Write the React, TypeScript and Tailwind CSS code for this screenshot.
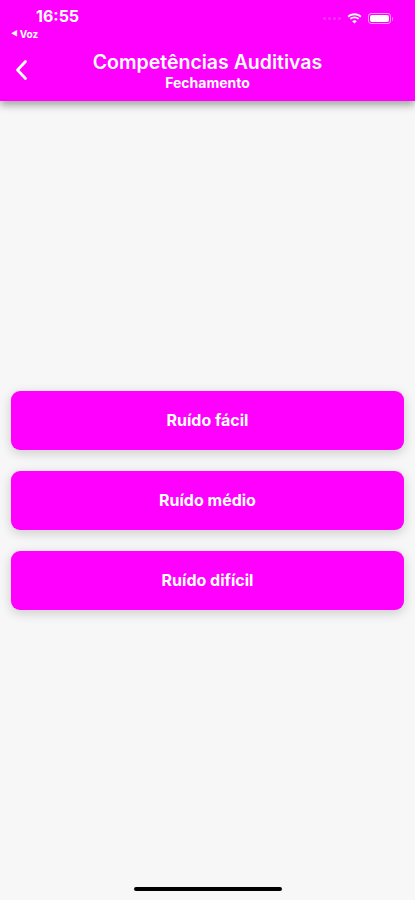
import React from "react";

const levels = ["Ruído fácil", "Ruído médio", "Ruído difícil"];

function StatusBar() {
  return (
    <div className="relative h-[44px] px-[36px]">
      <div className="pt-[6px] text-[16px] font-bold leading-[20px] text-white">16:55</div>
      <div className="absolute left-[11px] top-[28px] flex items-center gap-[2px] text-[10px] font-bold leading-[12px] text-white">
        <span className="text-[7px]">◀</span>
        <span>Voz</span>
      </div>
      <div className="absolute right-[22px] top-[13px] flex items-center gap-[6px]">
        <div className="flex items-end gap-[2px] opacity-20">
          <span className="h-[3px] w-[3px] rounded-full bg-white" />
          <span className="h-[3px] w-[3px] rounded-full bg-white" />
          <span className="h-[3px] w-[3px] rounded-full bg-white" />
          <span className="h-[3px] w-[3px] rounded-full bg-white" />
        </div>
        <svg width="15" height="11" viewBox="0 0 15 11">
          <path d="M7.5 2.2c2.2 0 4.2.8 5.7 2.2l1.2-1.3C12.5 1.3 10.1.3 7.5.3S2.5 1.3.6 3.1l1.2 1.3C3.3 3 5.3 2.2 7.5 2.2z" fill="white" />
          <path d="M7.5 5.3c1.3 0 2.5.5 3.5 1.3l1.2-1.3C10.9 4.1 9.3 3.4 7.5 3.4S4.1 4.1 2.8 5.3L4 6.6c1-.8 2.2-1.3 3.5-1.3z" fill="white" />
          <path d="M7.5 10.6L9.8 8.2C9.2 7.6 8.4 7.3 7.5 7.3s-1.7.3-2.3.9z" fill="white" />
        </svg>
        <div className="flex items-center gap-[1px]">
          <div className="flex h-[11px] w-[23px] items-center rounded-[3px] border border-white/60 p-[1px]">
            <div className="h-full w-full rounded-[2px] bg-white" />
          </div>
          <div className="h-[4px] w-[1.5px] rounded-r-sm bg-white/50" />
        </div>
      </div>
    </div>
  );
}

export default function App() {
  return (
    <div
      className="flex min-h-[900px] flex-col bg-[#f7f7f7]"
      style={{ fontFamily: "Inter, 'Noto Sans', sans-serif" }}
    >
      <header className="relative z-10 h-[101px] bg-[#ff00ff] shadow-[0_4px_8px_rgba(0,0,0,0.35)]">
        <StatusBar />
        <div className="relative flex h-[57px] flex-col items-center pt-[6px]">
          <button className="absolute left-[13px] top-[14px] text-white">
            <svg width="18" height="24" viewBox="0 0 18 24" fill="none">
              <path d="M12.5 3.5L4.5 12l8 8.5" stroke="white" strokeWidth="2.8" strokeLinecap="round" strokeLinejoin="round" />
            </svg>
          </button>
          <h1 className="text-[19.5px] font-semibold leading-[24px] text-white">Competências Auditivas</h1>
          <p className="text-[14px] font-bold leading-[17px] text-white">Fechamento</p>
        </div>
      </header>

      <main className="flex flex-1 flex-col justify-center gap-[21px] px-[11px] pt-[19px]">
        {levels.map((label) => (
          <button
            key={label}
            className="flex h-[59px] items-center justify-center rounded-[9px] bg-[#ff00ff] text-[16px] font-bold text-white shadow-[0_3px_12px_rgba(0,0,0,0.18)]"
          >
            {label}
          </button>
        ))}
      </main>

      <div className="flex h-[20px] justify-center">
        <div className="mt-[7px] h-[4px] w-[148px] rounded-full bg-black" />
      </div>
    </div>
  );
}
